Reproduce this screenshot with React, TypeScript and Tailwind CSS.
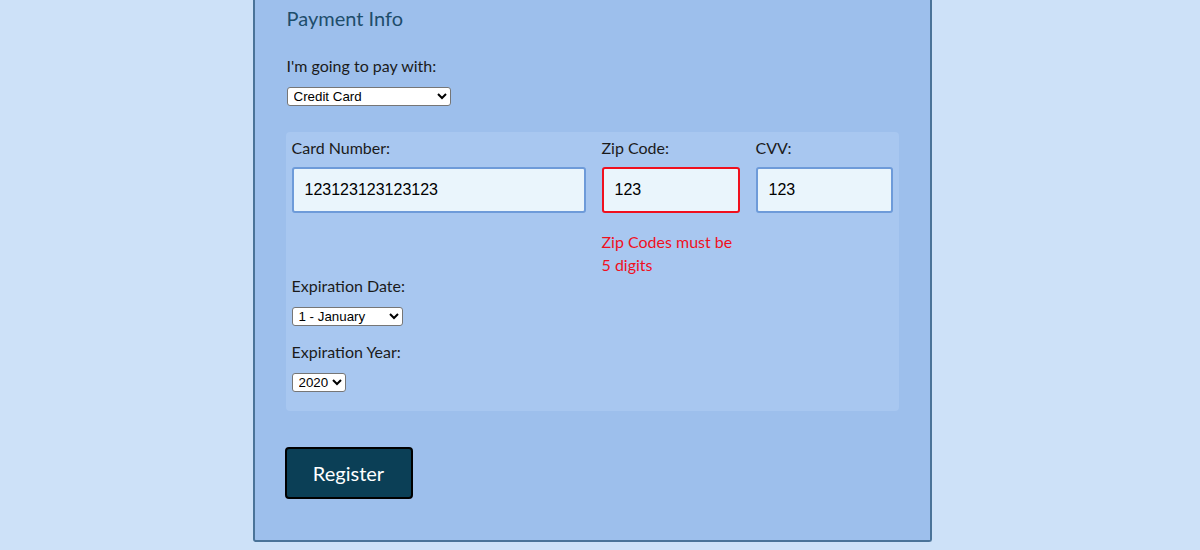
import React from 'react';

const selectCls =
  "h-[19px] bg-white border border-[#767676] rounded-[3px] text-[13.33px] text-black pl-[2px] font-['Liberation_Sans',Arial,sans-serif]";

const inputCls =
  "h-[46px] w-full bg-[#eaf5fc] border-2 rounded-[3px] px-[11px] text-[16px] text-black font-['Liberation_Sans',Arial,sans-serif] outline-none";

const App: React.FC = () => {
  return (
    <div className="min-h-[550px] w-full bg-[#cde1f8] flex justify-center pr-[16px] font-['Lato','Noto_Sans',sans-serif] text-[#1b1b1b]">
      <div className="w-[679px] h-[542px] bg-[#9dbfec] border-2 border-t-0 border-[#4a7399] rounded-b-[3px] px-[32px]">
        {/* Payment section */}
        <h2 className="text-[20px] leading-[28px] text-[#1e4d6b] pt-[4px]">Payment Info</h2>

        <div className="mt-[22px]">
          <label className="block text-[16px] leading-[24px]">I'm going to pay with:</label>
          <select className={`${selectCls} w-[164px] mt-[9px]`} defaultValue="cc">
            <option value="cc">Credit Card</option>
            <option value="pp">PayPal</option>
            <option value="bc">Bitcoin</option>
          </select>
        </div>

        <div className="mt-[25px] -ml-px w-[613px] bg-[#a8c7f0] rounded-[4px] px-[6px] pt-[4px] pb-[18px]">
          <div className="flex gap-4">
            <div className="w-[294px]">
              <label className="block text-[16px] leading-[24px]">Card Number:</label>
              <input className={`${inputCls} mt-[7px] border-[#6e9bd9]`} defaultValue="123123123123123" />
            </div>
            <div className="w-[138px]">
              <label className="block text-[16px] leading-[24px]">Zip Code:</label>
              <input className={`${inputCls} mt-[7px] border-[#f0101e]`} defaultValue="123" />
              <p className="mt-[17px] text-[16px] leading-[23px] text-[#f0101e]">Zip Codes must be 5 digits</p>
            </div>
            <div className="w-[137px]">
              <label className="block text-[16px] leading-[24px]">CVV:</label>
              <input className={`${inputCls} mt-[7px] border-[#6e9bd9]`} defaultValue="123" />
            </div>
          </div>

          <div className="mt-[-2px]">
            <label className="block text-[16px] leading-[24px]">Expiration Date:</label>
            <select className={`${selectCls} w-[111px] mt-[9px]`} defaultValue="1">
              <option value="1">1 - January</option>
              <option value="2">2 - February</option>
              <option value="3">3 - March</option>
            </select>
          </div>

          <div className="mt-[13px]">
            <label className="block text-[16px] leading-[24px]">Expiration Year:</label>
            <select className={`${selectCls} mt-[9px]`} defaultValue="2020">
              <option>2020</option>
              <option>2021</option>
              <option>2022</option>
            </select>
          </div>
        </div>

        <button className="mt-[36px] w-[128px] h-[52px] bg-[#0b3f56] border-2 border-black rounded-[4px] text-white text-[20px] -ml-[2px]">
          Register
        </button>
      </div>
    </div>
  );
};

export default App;
